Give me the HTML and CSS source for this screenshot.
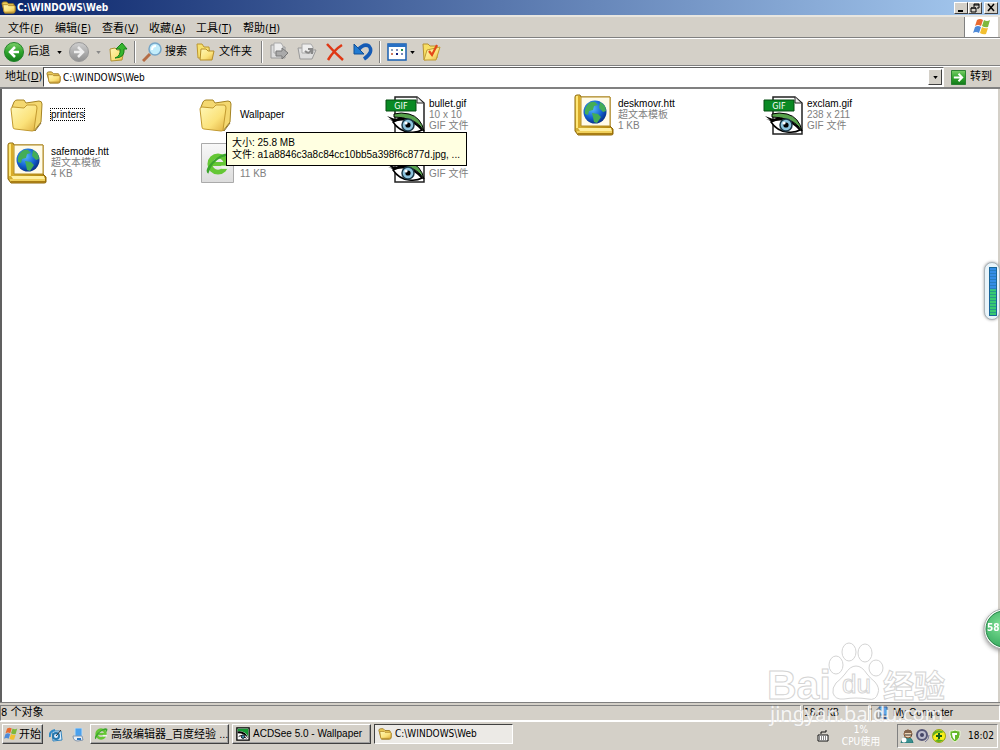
FILE: index.html
```html
<!DOCTYPE html>
<html lang="zh-CN">
<head>
<meta charset="utf-8">
<title>C:\WINDOWS\Web</title>
<link rel="stylesheet" href="styles.css">
</head>
<body>
<svg class="defs" aria-hidden="true">
  <defs>
    <linearGradient id="gFolder" x1="0" y1="0" x2="1" y2="1"><stop offset="0" stop-color="#fff8b8"/><stop offset=".6" stop-color="#fbe27a"/><stop offset="1" stop-color="#e0b040"/></linearGradient>
    <linearGradient id="gGreen" x1="0" y1="0" x2="0" y2="1"><stop offset="0" stop-color="#7ccf6a"/><stop offset=".5" stop-color="#2fa52c"/><stop offset="1" stop-color="#137a1a"/></linearGradient>
    <linearGradient id="gGray" x1="0" y1="0" x2="0" y2="1"><stop offset="0" stop-color="#cfcfcf"/><stop offset="1" stop-color="#8f8f8f"/></linearGradient>
    <linearGradient id="gGold" x1="0" y1="0" x2="1" y2="1"><stop offset="0" stop-color="#f8e060"/><stop offset="1" stop-color="#a87800"/></linearGradient>
    <radialGradient id="gGlobe" cx=".4" cy=".35" r=".7"><stop offset="0" stop-color="#58b8ff"/><stop offset=".6" stop-color="#1260d0"/><stop offset="1" stop-color="#062a80"/></radialGradient>
    <radialGradient id="gBall" cx=".4" cy=".4" r=".7"><stop offset="0" stop-color="#7fe096"/><stop offset="1" stop-color="#2ea458"/></radialGradient>
    <linearGradient id="gPage" x1="0" y1="0" x2="0" y2="1"><stop offset="0" stop-color="#f8f8f8"/><stop offset="1" stop-color="#dcdcdc"/></linearGradient>
    <symbol id="folder" viewBox="0 0 40 42">
      <path d="M5 13 7 8q1-2 3-2l7 0 2 3 13-2q3 0 3 3l-1 18-7 9z" fill="#f4d870" stroke="#a58424"/>
      <path d="M4 15q0-2 2-2l11 1 3-3 8 0q2 0 2 3l-3 22q0 1-2 1L8 35q-2 0-2-2z" fill="url(#gFolder)" stroke="#c29a30"/>
      <path d="M28 37l6-8" stroke="#8a7030"/>
    </symbol>
    <symbol id="small-folder" viewBox="0 0 16 16">
      <path d="M1 4q0-2 2-2h3l2 2h5q1 0 1 2l1 1v5q0 2-2 2H4z" fill="#edcd58" stroke="#9b7925"/>
      <path d="M2 5h5l1 1h6q1 0 1 1v4q0 2-2 2H4q-1 0-1-1z" fill="url(#gFolder)" stroke="#b38a2c"/>
    </symbol>
    <symbol id="book" viewBox="0 0 40 42">
      <path d="M1 3q0-2 2-2h3l1 2h29v29l3 3v5q0 1-2 1H4l-3-4z" fill="url(#gGold)" stroke="#8d6608"/>
      <path d="M7 3h29v29H7z" fill="#fffbe8" stroke="#b48c20"/>
      <path d="M2 2h4v32H2z" fill="#d9ab2a"/><path d="M2 2h2v32H2z" fill="#ffe777"/>
      <path d="M4 34h33l1 3H6z" fill="#fff0a0"/><path d="M4 40h34" stroke="#a87d14" stroke-width="2"/><path d="M3 38h35" stroke="#f0d05c" stroke-width="2"/>
      <circle cx="21" cy="18" r="11.5" fill="url(#gGlobe)"/>
      <path d="M12 13q3-6 9-5l3 3-4 1-1 4-4 1-1 4-3-1q-1-4 1-7zM18 19l6 1 3 3-4 6-3-1-1-5zM26 8q6 3 6 9l-3 1-4-4z" fill="#43ad57"/>
    </symbol>
    <symbol id="gif" viewBox="0 0 40 42">
      <path d="M10 3h22l7 6v31H10z" fill="#fff" stroke="#222" stroke-width="1.5"/>
      <path d="M32 3v6h6" fill="#eee" stroke="#222"/>
      <path d="M1 6h30v11H1z" fill="#0a8a24" stroke="#064c12"/>
      <text x="16" y="15" class="gif-label">GIF</text>
      <path d="M9 20q7-2 15 0 12 3 15 17-5-8-13-11-8-3-17-3z" fill="#58a34d" stroke="#000"/>
      <path d="M2 22l8 3q7-3 16 1 9 4 13 12-7-7-14-9-8-3-15-1L3 25l4 1z" fill="#000"/>
      <path d="M8 28q8-4 16-1 7 2 13 9-5 3-13 2-10-1-16-10z" fill="#fff" stroke="#000" stroke-width="1.5"/>
      <circle cx="23" cy="31" r="6" fill="#8cc4de" stroke="#1b3948" stroke-width="1.5"/><circle cx="23" cy="31" r="2.6"/><circle cx="21" cy="29" r="1.6" fill="#fff"/>
    </symbol>
    <symbol id="browser" viewBox="0 0 16 16">
      <circle cx="8" cy="8" r="5" fill="none" stroke="#65c735" stroke-width="3"/>
      <path d="M4 8h9" stroke="#65c735" stroke-width="2.5"/><path d="M10 11h5v-2h-5z" fill="#eef5e8"/>
      <path d="M2 14Q-1 12 5 6q7-6 10-4 1 1-1 4 0-4-4-2-6 3-8 10z" fill="#3aa52c"/>
    </symbol>
    <symbol id="windows" viewBox="0 0 18 18">
      <path d="M4 2q3-2 6 0L8 8Q5 6 2 8z" fill="#e86a30"/><path d="M11 2q3 2 6 0l-2 7q-3 1-6-1z" fill="#7db83c"/>
      <path d="M2 9q3-2 6 0l-2 6q-3-2-6 0z" fill="#4e8ad8"/><path d="M9 9q3 2 6 1l-2 6q-3 1-6-1z" fill="#f2bf30"/>
    </symbol>
    <symbol id="eye" viewBox="0 0 16 16"><path d="M1 1h14v14H1z" fill="#fff" stroke="#000" stroke-width="1.5"/><path d="M2 2h12v9Q10 4 2 5z" fill="#159a32"/><path d="M2 5q9-1 12 8-4-6-12-6z"/><path d="M3 11q3-3 9 2" fill="none" stroke="#000"/><circle cx="8" cy="11" r="2" fill="#428fb5" stroke="#000"/></symbol>
  </defs>
</svg>

<header class="titlebar">
  <svg class="ico16"><use href="#small-folder"/></svg>
  <h1 class="title">C:\WINDOWS\Web</h1>
  <div class="winbuttons">
    <button class="winbtn" aria-label="最小化"><svg viewBox="0 0 12 10"><path d="M3 8h5" stroke="#000" stroke-width="2"/></svg></button>
    <button class="winbtn" aria-label="还原"><svg viewBox="0 0 12 10"><path d="M5 4V1h5v4H8M5 2h5M2 5h5v4H2zM2 5h5" fill="none" stroke="#000"/></svg></button>
    <button class="winbtn close" aria-label="关闭"><svg viewBox="0 0 12 10"><path d="M3 1l6 7M9 1L3 8" stroke="#000" stroke-width="1.5"/></svg></button>
  </div>
</header>

<nav class="menubar">
  <div class="menus">
    <button class="menu">文件(<u>F</u>)</button><button class="menu">编辑(<u>E</u>)</button><button class="menu">查看(<u>V</u>)</button><button class="menu">收藏(<u>A</u>)</button><button class="menu">工具(<u>T</u>)</button><button class="menu">帮助(<u>H</u>)</button>
  </div>
  <div class="brand"><svg class="ico18"><use href="#windows"/></svg></div>
</nav>

<div class="toolbar">
  <button class="tool back"><svg class="ico20" viewBox="0 0 20 20"><circle cx="10" cy="10" r="9.5" fill="url(#gGreen)" stroke="#23842a"/><path d="M15 10H6m5-5-5 5 5 5" fill="none" stroke="#fff" stroke-width="2.5"/></svg>后退</button>
  <button class="tool drop" aria-label="后退列表"><svg class="arrow" viewBox="0 0 6 4"><path d="M0 0h6L3 4z"/></svg></button>
  <button class="tool" aria-label="前进"><svg class="ico20" viewBox="0 0 20 20"><circle cx="10" cy="10" r="9.5" fill="url(#gGray)" stroke="#999"/><path d="M5 10h9M9 5l5 5-5 5" fill="none" stroke="#eee" stroke-width="2.5"/></svg></button>
  <button class="tool drop" aria-label="前进列表"><svg class="arrow" viewBox="0 0 6 4"><path d="M0 0h6L3 4z" fill="#888"/></svg></button>
  <button class="tool" aria-label="向上"><svg class="ico20" viewBox="0 0 20 20"><path d="M2 7l5-1 2 2 7 0-2 10-11 1z" fill="url(#gFolder)" stroke="#b29435"/><path d="M7 16q6-2 5-9H8l6-6 5 6h-3q1 9-9 9z" fill="#36b52d" stroke="#16801b"/></svg></button>
  <span class="sep"></span>
  <button class="tool search"><svg class="ico20" viewBox="0 0 20 20"><path d="M8 12l-7 7" stroke="#b56c45" stroke-width="3"/><circle cx="13" cy="7" r="6" fill="#c2edfb" stroke="#76a6c8" stroke-width="1.5"/><path d="M10 8q0-4 4-4" fill="none" stroke="#fff" stroke-width="2"/></svg>搜索</button>
  <button class="tool folders"><svg class="ico20" viewBox="0 0 20 20"><path d="M1 2h5l2 3h5l1 11H2z" fill="#f7e16f" stroke="#bc962f"/><path d="M5 7h5l2 2h6l-2 9H4z" fill="url(#gFolder)" stroke="#b58d29"/></svg>文件夹</button>
  <span class="sep"></span>
  <button class="tool gap-right" aria-label="移至"><svg class="ico20" viewBox="0 0 20 20"><path d="M2 3h5l1 2h8v11H2z" fill="#ddd" stroke="#999"/><path d="M5 1h7l2 3v7H5z" fill="#eee" stroke="#aaa"/><path d="M7 9h6V6l6 5-6 6v-3H7z" fill="#aaa" stroke="#777"/></svg></button>
  <button class="tool gap-right" aria-label="复制到"><svg class="ico20" viewBox="0 0 20 20"><path d="M1 6h5l2 2h11l-4 9H3z" fill="#ddd" stroke="#999"/><path d="M5 2h9l2 3v6H5z" fill="#eee" stroke="#aaa"/><path d="M8 9q4 4 6-1M11 7l4 0v5" fill="none" stroke="#888" stroke-width="2"/></svg></button>
  <button class="tool gap-right" aria-label="删除"><svg class="ico20" viewBox="0 0 20 20"><path d="M2 2q7 8 16 16M17 3Q9 8 3 18" fill="none" stroke="#df3815" stroke-width="2.5"/></svg></button>
  <button class="tool" aria-label="撤销"><svg class="ico20" viewBox="0 0 20 20"><path d="M5 8q6-7 11-4 5 6-5 13" fill="none" stroke="#155bb5" stroke-width="3.5"/><path d="M1 2v10h10z" fill="#207bd3" stroke="#125096"/></svg></button>
  <span class="sep"></span>
  <button class="tool views" aria-label="查看"><svg class="ico20" viewBox="0 0 20 20"><path d="M1 2h18v16H1z" fill="#fff" stroke="#175fb1" stroke-width="1.5"/><path d="M1 2h18v3H1z" fill="#2870c4"/><path d="M4 8h2" stroke="#8aa0b8" stroke-width="2"/><path d="M4 12h2" stroke="#cf7d61" stroke-width="2"/><path d="M9 8h2M14 12h2" stroke="#7a8bbb" stroke-width="2"/><path d="M14 8h2" stroke="#248c51" stroke-width="2"/><path d="M9 12h2" stroke="#111f80" stroke-width="2"/></svg><svg class="arrow" viewBox="0 0 6 4"><path d="M0 0h6L3 4z"/></svg></button>
  <button class="tool options" aria-label="文件夹选项"><svg class="ico20" viewBox="0 0 20 20"><path d="M2 2h5l2 2h7v12l-13 2z" fill="#f8df64" stroke="#b69130"/><path d="M3 18 6 8l13-3-4 13z" fill="url(#gFolder)" stroke="#c19c32"/><path d="M8 9l3 4 5-10" fill="none" stroke="#e3471a" stroke-width="2.2"/></svg></button>
</div>

<form class="addressbar">
  <label class="address-label" for="address">地址(<u>D</u>)</label>
  <div class="combo">
    <svg class="ico16"><use href="#small-folder"/></svg>
    <input id="address" class="address" type="text" value="C:\WINDOWS\Web">
    <button class="combo-btn" type="button" aria-label="展开"><svg class="arrow" viewBox="0 0 6 4"><path d="M0 0h6L3 4z"/></svg></button>
  </div>
  <button class="go" type="button"><svg class="ico16" viewBox="0 0 16 16"><path d="M.5.5h15v15H.5z" fill="url(#gGreen)" stroke="#227c2a"/><path d="M3 8h9M8 4l4 4-4 4" fill="none" stroke="#fff" stroke-width="2"/></svg>转到</button>
</form>

<main class="files">
  <div class="file"><svg class="file-icon"><use href="#folder"/></svg><div class="info"><span class="name focused">printers</span></div></div>
  <div class="file"><svg class="file-icon"><use href="#folder"/></svg><div class="info"><span class="name">Wallpaper</span></div>
    <div class="tooltip" role="tooltip"><div>大小: 25.8 MB</div><div>文件: a1a8846c3a8c84cc10bb5a398f6c877d.jpg, ...</div></div></div>
  <div class="file"><svg class="file-icon"><use href="#gif"/></svg><div class="info"><span class="name">bullet.gif</span><span>10 x 10</span><span>GIF 文件</span></div></div>
  <div class="file"><svg class="file-icon"><use href="#book"/></svg><div class="info"><span class="name">deskmovr.htt</span><span>超文本模板</span><span>1 KB</span></div></div>
  <div class="file"><svg class="file-icon"><use href="#gif"/></svg><div class="info"><span class="name">exclam.gif</span><span>238 x 211</span><span>GIF 文件</span></div></div>
  <div class="file"><svg class="file-icon"><use href="#book"/></svg><div class="info"><span class="name">safemode.htt</span><span>超文本模板</span><span>4 KB</span></div></div>
  <div class="file"><svg class="file-icon" viewBox="0 0 40 42"><path d="M5.5 1.5h32v39h-32z" fill="url(#gPage)" stroke="#aaa"/><use href="#browser" x="9" y="9" width="26" height="26"/></svg><div class="info"><span class="name">&nbsp;</span><span>360 se HTML Document</span><span>11 KB</span></div></div>
  <div class="file"><svg class="file-icon"><use href="#gif"/></svg><div class="info"><span class="name">&nbsp;</span><span>27 x 36</span><span>GIF 文件</span></div></div>
</main>

<footer class="statusbar">
  <div class="status objects">8 个对象</div>
  <div class="status size">18.8 KB</div>
  <div class="status zone"><svg class="ico14" viewBox="0 0 14 14"><path d="M4 1h8v8H4z" fill="#5ba5e8" stroke="#35639c"/><path d="M2 3h3v9H2z" fill="#e8eef4" stroke="#777"/><path d="M6 12h7" stroke="#385789" stroke-width="2"/></svg>My Computer</div>
</footer>

<div class="taskbar">
  <button class="task start"><svg class="ico14"><use href="#windows"/></svg>开始</button>
  <div class="quick">
    <button class="tool" aria-label="浏览器"><svg class="ico14" viewBox="0 0 14 14"><path d="M3 3h9l1 9-9 1z" fill="#dbeeff" stroke="#3485bd"/><path d="M1 9Q0 3 6 2" fill="none" stroke="#2e8ac8" stroke-width="2"/><circle cx="7" cy="8" r="3" fill="none" stroke="#2678ae" stroke-width="2"/><path d="M7 8l5-6" stroke="#333"/></svg></button>
    <button class="tool" aria-label="显示桌面"><svg class="ico14" viewBox="0 0 14 14"><path d="M4 0h7v9H4z" fill="#4aa1ee" stroke="#bed9ee"/><path d="M2 8q0 5 5 5l5-1-1-4z" fill="#e8eef5" stroke="#8296ad"/><path d="M6 11h4" stroke="#2878c4" stroke-width="2"/></svg></button>
  </div>
  <div class="tasks">
    <button class="task wide cjk"><svg class="ico14"><use href="#browser"/></svg>高级编辑器_百度经验 ...</button>
    <button class="task wide"><svg class="ico14"><use href="#eye"/></svg>ACDSee 5.0 - Wallpaper</button>
    <button class="task wide active"><svg class="ico14"><use href="#small-folder"/></svg>C:\WINDOWS\Web</button>
  </div>
  <svg class="ime" viewBox="0 0 12 12" role="img" aria-label="输入法"><path d="M1 5h10v6H1z" fill="#fff" stroke="#111"/><path d="M2 7h8M2 9h8" stroke="#111" stroke-dasharray="1 1"/><path d="M4 4V2h5V0" fill="none" stroke="#111"/></svg>
  <div class="cpu"><span>1%</span><span>CPU使用</span></div>
  <div class="tray">
    <svg class="ico14" viewBox="0 0 14 14"><path d="M1 14q1-6 6-6t6 6z" fill="#3a9090" stroke="#277"/><circle cx="8" cy="5" r="4" fill="#eed6b8" stroke="#82502f"/><path d="M4 4q1-4 5-3 3 0 3 3" fill="#84664e"/><path d="M5 6h7" stroke="#333"/><circle cx="4" cy="11" r="2.5" fill="#fff"/></svg>
    <svg class="ico14" viewBox="0 0 14 14"><circle cx="6" cy="6" r="5" fill="#bbc" stroke="#555577" stroke-width="2"/><circle cx="6" cy="6" r="2" fill="#446"/><path d="M9 13q4-2 4-7" fill="none" stroke="#779"/></svg>
    <svg class="ico14" viewBox="0 0 14 14"><circle cx="7" cy="7" r="6.5" fill="#f8ee18" stroke="#9ba315"/><path d="M1 4q4-5 11-1L9 4Q5 2 1 7zM13 9q-4 6-10 3l3-2q4 2 7 0z" fill="#60af20"/><path d="M7 4v6M4 7h6" stroke="#17601b" stroke-width="2"/></svg>
    <svg class="ico14" viewBox="0 0 14 14"><path d="M2 2q3 0 5-1 2 1 5 1 1 8-5 11Q1 10 2 2z" fill="#66b82a" stroke="#eff8db"/><path d="M4 4h5v2H7v5q-3-2-3-7z" fill="#fff"/></svg>
    <time class="clock">18:02</time>
  </div>
</div>

<div class="meter" role="img" aria-label="网速"><div class="meter-bar"></div></div>
<svg class="ball" viewBox="0 0 42 42" role="img" aria-label="58"><circle cx="21" cy="21" r="20" fill="#f5fff8" stroke="#aaa"/><circle cx="21" cy="21" r="18" fill="url(#gBall)" stroke="#258146"/><text x="4" y="23" class="ball-text">58</text></svg>
<svg class="watermark" viewBox="0 0 180 84" role="img" aria-label="Baidu 经验">
  <text x="-2" y="57" class="outline wm-large">Bai</text>
  <g class="outline"><ellipse cx="67" cy="23" rx="7" ry="9"/><ellipse cx="80" cy="10" rx="7" ry="9"/><ellipse cx="96" cy="11" rx="7" ry="9"/><ellipse cx="107" cy="26" rx="7" ry="8"/><path d="M87 24q6 0 11 8 3 4 8 8 5 6 3 11-2 8-10 6-6-1-12-1t-12 1q-9 1-11-6-1-5 3-10 5-4 9-9 5-8 11-8z"/></g>
  <text x="73" y="51" class="outline wm-du">du</text><text x="114" y="55" class="outline wm-cjk">经验</text>
  <text x="1" y="79" class="wm-url">jingyan.baidu.com</text>
</svg>
</body>
</html>
```

FILE: styles.css
```css
* { box-sizing: border-box; }
html, body { margin: 0; height: 100%; }
body {
  position: relative;
  display: flex;
  flex-direction: column;
  overflow: hidden;
  background: #d4d0c8;
  color: #000;
  font: 10px/12px "DejaVu Sans Condensed", "Noto Sans CJK SC", sans-serif;
}
button { margin: 0; padding: 0; border: 0; background: none; color: inherit; font: inherit; white-space: nowrap; }
svg { display: block; flex: none; }
.defs { position: absolute; width: 0; height: 0; }
.ico14 { width: 14px; height: 14px; }
.ico16 { width: 15px; height: 15px; }
.ico18 { width: 18px; height: 18px; }
.ico20 { width: 20px; height: 20px; }
.arrow { width: 5px; height: 3px; }

.titlebar { display: flex; align-items: center; height: 15px; padding: 0 2px 0 1px; background: linear-gradient(90deg, #0a246a, #a6caf0); color: #fff; }
.title { flex: 1; margin: 0 0 0 1px; font-size: 10px; line-height: 15px; font-weight: bold; }
.winbuttons { display: flex; }
.winbtn { width: 14px; height: 12px; background: #d4d0c8; border: 1px solid; border-color: #fff #404040 #404040 #fff; }
.winbtn svg { width: 12px; height: 10px; }
.winbtn.close { margin-left: 2px; }

.menubar { display: flex; height: 23px; padding: 0 2px; border-bottom: 1px solid #808080; border-top: 2px solid #e8e6e0; }
.menus { display: flex; flex: 1; align-items: center; }
.menu { width: 47px; padding: 3px 0 0 6px; text-align: left; font-size: 11px; line-height: 17px; }
.brand { display: flex; align-items: center; justify-content: center; width: 34px; background: #fff; border-left: 1px solid #808080; }

.toolbar { display: flex; align-items: center; height: 28px; padding: 0 4px; border-top: 1px solid #fff; border-bottom: 1px solid #808080; }
.tool { display: flex; align-items: center; gap: 4px; font-size: 11px; line-height: 14px; }
.drop { width: 19px; justify-content: center; }
.sep { width: 2px; height: 22px; margin: 0 6px; border-left: 1px solid #808080; border-right: 1px solid #fff; }
.search { gap: 3px; margin-right: 9px; }
.folders { gap: 3px; margin-right: 3px; }
.gap-right { margin-right: 8px; }
.views { gap: 3px; }
.options { margin-left: 6px; }

.addressbar { display: flex; align-items: center; height: 23px; margin: 0; padding: 0 2px; border-top: 1px solid #fff; border-bottom: 2px solid #808080; }
.address-label { width: 41px; padding-left: 3px; font-size: 11px; white-space: nowrap; }
.combo { display: flex; flex: 1; align-items: center; height: 20px; padding: 1px; padding-left: 2px; background: #fff; border: 1px solid; border-color: #606060 #fff #fff #404040; }
.address { flex: 1; min-width: 0; height: 16px; margin: 0; padding: 0 2px; border: 0; outline: 0; background: none; font: inherit; }
.combo-btn { display: flex; align-items: center; justify-content: center; width: 14px; height: 16px; background: #d4d0c8; border: 1px solid; border-color: #fff #404040 #404040 #fff; }
.go { display: flex; align-items: center; gap: 4px; width: 54px; padding-left: 7px; font-size: 11px; }

.files {
  display: grid;
  flex: 1;
  grid-template-columns: repeat(auto-fill, 189px);
  grid-auto-rows: 48px;
  align-content: start;
  padding: 2px 0 0 5px;
  background: #fff;
  border-left: 2px solid #606060;
  border-right: 2px solid #d4d0c8;
  font-family: "Liberation Sans", "Noto Sans CJK SC", sans-serif;
}
.file { position: relative; display: flex; align-items: center; gap: 4px; }
.file-icon { width: 40px; height: 42px; }
.info { display: flex; flex-direction: column; align-items: flex-start; padding-bottom: 2px; line-height: 11px; color: #808080; white-space: nowrap; }
.name { color: #000; }
.focused { outline: 1px dotted #000; }
.tooltip { position: absolute; z-index: 2; left: 30px; top: 41px; padding: 4px 6px 4px 5px; background: #ffffe1; border: 1px solid #000; white-space: nowrap; }
.gif-label { fill: #fff; font: 9px "DejaVu Sans Condensed", sans-serif; text-anchor: middle; }

.statusbar { display: flex; gap: 2px; height: 19px; padding: 2px 0 0; border-top: 1px solid #808080; }
.status { display: flex; align-items: center; border: 1px solid; border-color: #808080 #fff #fff #808080; white-space: nowrap; }
.objects { flex: 1; font-size: 11px; }
.size { width: 66px; }
.zone { width: 129px; gap: 4px; padding-left: 3px; font-family: "Liberation Sans", sans-serif; }

.taskbar { display: flex; align-items: flex-start; height: 29px; padding: 2px 2px 0; border-top: 1px solid #fff; }
.task { display: flex; align-items: center; gap: 3px; height: 20px; padding: 0 3px; overflow: hidden; border: 1px solid; border-color: #fff #404040 #404040 #fff; box-shadow: inset -1px -1px #a0a0a0; font-family: "Liberation Sans", "Noto Sans CJK SC", sans-serif; }
.start { width: 41px; gap: 1px; padding: 0 1px; font-size: 11px; }
.quick { display: flex; align-items: center; gap: 8px; height: 22px; margin: 0 5px 0 6px; }
.tasks { display: flex; flex: 1; gap: 3px; min-width: 0; }
.wide { width: 139px; }
.cjk { font-size: 11px; }
.active { background: #eceae6; border-color: #404040 #fff #fff #404040; box-shadow: none; font-family: "DejaVu Sans Condensed", sans-serif; }
.ime { width: 12px; height: 12px; margin-top: 6px; }
.cpu { display: flex; flex-direction: column; width: 68px; padding-right: 4px; text-align: center; color: #fff; }
.tray { display: flex; align-items: center; gap: 2px; width: 101px; height: 24px; padding-left: 2px; border: 1px solid; border-color: #808080 #fff #fff #808080; }
.clock { margin-left: 4px; }

.meter { position: absolute; right: 0; top: 262px; width: 16px; height: 58px; padding: 4px 2px 3px 4px; background: #e9f4fa; border: 1px solid #aab4ba; border-radius: 8px; box-shadow: 0 0 3px #999; }
.meter-bar { height: 100%; border: 1px solid #17659a; background: repeating-linear-gradient(transparent 0 2px, #1b6d9c80 2px 3px), linear-gradient(#338ce5 45%, #38ca72 46%); }
.ball { position: absolute; right: -25px; bottom: 100px; width: 42px; height: 42px; filter: drop-shadow(0 2px 2px #999); }
.ball-text { fill: #fff; font: bold 10px "DejaVu Sans Condensed", sans-serif; }
.watermark { position: absolute; right: 51px; bottom: 24px; width: 180px; height: 84px; overflow: visible; }
.outline { fill: #ffffffd0; stroke: #d4d4d4; stroke-width: 1; }
.wm-large { font: bold 41px "Liberation Sans", sans-serif; }
.wm-du { font: 26px "Liberation Sans", sans-serif; }
.wm-cjk { font: bold 31px "Noto Sans CJK SC", sans-serif; }
.wm-url { fill: #ffffffd0; stroke: #c8c8c880; stroke-width: 1px; paint-order: stroke; font: 20px "Noto Sans", sans-serif; }
```
